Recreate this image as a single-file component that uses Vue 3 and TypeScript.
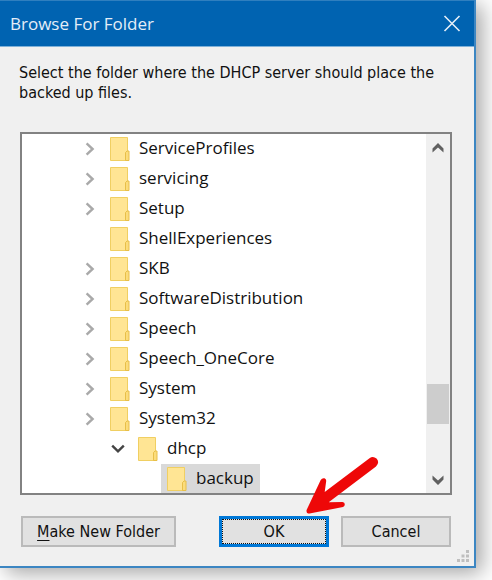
<script setup lang="ts">
import { ref } from 'vue'

interface Folder {
  name: string
  level: number
  state: 'closed' | 'open' | 'leaf'
}

const folders: Folder[] = [
  { name: 'ServiceProfiles', level: 0, state: 'closed' },
  { name: 'servicing', level: 0, state: 'closed' },
  { name: 'Setup', level: 0, state: 'closed' },
  { name: 'ShellExperiences', level: 0, state: 'leaf' },
  { name: 'SKB', level: 0, state: 'closed' },
  { name: 'SoftwareDistribution', level: 0, state: 'closed' },
  { name: 'Speech', level: 0, state: 'closed' },
  { name: 'Speech_OneCore', level: 0, state: 'closed' },
  { name: 'System', level: 0, state: 'closed' },
  { name: 'System32', level: 0, state: 'closed' },
  { name: 'dhcp', level: 1, state: 'open' },
  { name: 'backup', level: 2, state: 'leaf' },
]

const selected = ref('backup')
</script>

<template>
  <main class="desktop">
    <section class="dialog" role="dialog" aria-labelledby="dialog-title">
      <header class="titlebar">
        <h1 id="dialog-title" class="title">Browse For Folder</h1>
        <button class="close" type="button" aria-label="Close">
          <svg width="18" height="18" viewBox="0 0 18 18">
            <path d="M1.500 1L16.500 16M16.500 1L1.500 16" fill="none" stroke="#e4eef8" stroke-width="1.6" />
          </svg>
        </button>
      </header>

      <div class="body">
        <p class="prompt">Select the folder where the DHCP server should place the backed up files.</p>

        <div class="tree">
          <ul class="rows" role="tree">
            <li
              v-for="folder in folders"
              :key="folder.name"
              class="row"
              :class="'level-' + folder.level"
              role="treeitem"
              :aria-selected="selected === folder.name"
            >
              <span class="toggle">
                <svg v-if="folder.state === 'closed'" width="10" height="14" viewBox="0 0 10 14">
                  <path d="M1.6 1.4L7.6 7L1.6 12.6" fill="none" stroke="#a9a9a9" stroke-width="2.4" />
                </svg>
                <svg v-else-if="folder.state === 'open'" width="14" height="10" viewBox="0 0 14 10">
                  <path d="M1.2 1.6L7 7.4L12.8 1.6" fill="none" stroke="#444" stroke-width="2.4" />
                </svg>
              </span>
              <button
                class="folder"
                :class="{ selected: selected === folder.name }"
                type="button"
                @click="selected = folder.name"
              >
                <svg class="folder-icon" width="20" height="24" viewBox="0 0 20 24">
                  <path d="M.5 .5H17.5V23.5H.5Z" fill="#ffe594" stroke="#f0cf62" />
                  <path d="M15.5 23.5V15.5L17 14H19V23.5Z" fill="#fbdc7c" stroke="#e8bf48" />
                </svg>
                <span class="name">{{ folder.name }}</span>
              </button>
            </li>
          </ul>
          <div class="scrollbar">
            <button class="scroll-button" type="button" aria-label="Scroll up">
              <svg width="12" height="10" viewBox="0 0 12 10">
                <path d="M.5 5.500L6 0L11.500 5.500V9.500L6 4.500L.5 9.500Z" fill="#606060" />
              </svg>
            </button>
            <div class="track"><div class="thumb"></div></div>
            <button class="scroll-button" type="button" aria-label="Scroll down">
              <svg width="12" height="10" viewBox="0 0 12 10">
                <path d="M.5 4.500L6 10L11.500 4.500V.5L6 5.500L.5 .5Z" fill="#606060" />
              </svg>
            </button>
          </div>
        </div>

        <footer class="actions">
          <button class="button make" type="button"><u>M</u>ake New Folder</button>
          <div class="confirm">
            <button class="button primary" type="button"><span class="focus">OK</span></button>
            <svg class="arrow" width="76" height="60" viewBox="0 0 76 60" aria-hidden="true">
              <path
                d="M66.500 2.200Q70 -.5 73.500 2.500Q77 6.500 73 10.500L25.700 46.300L39.500 46Q41.800 46.500 41.800 48.300Q41.800 50.300 40 51L6.500 57.600Q3 57.500 3.600 54L17.700 24Q19 21.800 21.500 22.300Q23.400 23.200 23.200 25L21.700 36Z"
                fill="#ee0808"
              />
            </svg>
          </div>
          <button class="button" type="button">Cancel</button>
        </footer>
      </div>

      <svg class="grip" width="13" height="13" viewBox="0 0 13 13" aria-hidden="true">
        <path
          d="M9 0h3v3h-3zM4.500 4.500h3v3h-3zM9 4.500h3v3h-3zM0 9h3v3h-3zM4.500 9h3v3h-3zM9 9h3v3h-3z"
          fill="#bfbfbf"
        />
      </svg>
    </section>
  </main>
</template>

<style>
body {
  margin: 0;
  background: #fff;
}
</style>

<style scoped>
.desktop {
  padding: 0 16px 13px 0;
  overflow: hidden;
  font-family: 'Open Sans', 'Noto Sans', sans-serif;
  color: #111;
}

.dialog {
  position: relative;
  background: #f0f0f0;
  border: solid #3c86c2;
  border-width: 0 2px 2px 0;
  box-shadow: 6px 5px 20px rgba(0, 0, 0, 0.36);
}

.titlebar {
  display: flex;
  align-items: center;
  justify-content: space-between;
  height: 45px;
  padding: 0 13px 0 10px;
  background: #0063b1;
  border-top: 1px solid #2f7fbf;
  border-bottom: 1px solid #7fb1d8;
}

.title {
  margin: 0;
  font-size: 17px;
  font-weight: 400;
  color: #e4eef8;
}

button {
  font: inherit;
  color: inherit;
}

.close {
  display: flex;
  padding: 0;
  border: 0;
  background: none;
}

.body {
  padding: 16px 22px 19px 19px;
}

.prompt {
  margin: 0 0 29px;
  font-family: 'DejaVu Sans Condensed', 'Noto Sans', sans-serif;
  font-size: 16px;
  line-height: 20px;
}

.tree {
  display: flex;
  height: 359px;
  margin-left: 1px;
  border: 2px solid #828282;
  background: #fff;
}

.rows {
  flex: 1;
  margin: 0;
  padding: 0;
  overflow: hidden;
  list-style: none;
}

.row {
  display: flex;
  height: 30px;
  padding-left: 54px;
}

.level-1 {
  padding-left: 82px;
}

.level-2 {
  padding-left: 111px;
}

.toggle {
  display: flex;
  align-items: center;
  justify-content: center;
  width: 28px;
}

.folder {
  display: flex;
  align-items: center;
  gap: 9px;
  padding: 0 6px;
  border: 0;
  background: none;
  font-size: 17px;
}

.folder.selected {
  background: #d9d9d9;
}

.name {
  padding-bottom: 3px;
}

.scrollbar {
  display: flex;
  flex-direction: column;
  width: 24px;
  background: #f0f0f0;
}

.scroll-button {
  display: flex;
  align-items: center;
  justify-content: center;
  height: 27px;
  padding: 0;
  border: 0;
  background: none;
}

.track {
  display: flex;
  flex: 1;
  flex-direction: column;
  justify-content: flex-end;
  padding: 0 1px 42px;
}

.thumb {
  height: 40px;
  background: #cdcdcd;
}

.actions {
  display: flex;
  gap: 12px;
  margin-top: 21px;
  padding: 0 1px 0 2px;
}

.button {
  width: 110px;
  height: 31px;
  padding: 0;
  border: 2px solid #bababa;
  background: #e1e1e1;
  font-family: 'DejaVu Sans Condensed', 'Noto Sans', sans-serif;
  font-size: 16px;
  line-height: 20px;
}

.button u {
  text-underline-offset: 3px;
}

.make {
  width: 155px;
  margin-right: auto;
}

.confirm {
  position: relative;
}

.primary {
  display: flex;
  padding: 0;
  border: 3px solid #0078d7;
}

.focus {
  flex: 1;
  border: 1px dotted #111;
  line-height: 23px;
}

.arrow {
  position: absolute;
  left: 84px;
  bottom: 31px;
}

.grip {
  position: absolute;
  right: 4px;
  bottom: 3px;
}
</style>
